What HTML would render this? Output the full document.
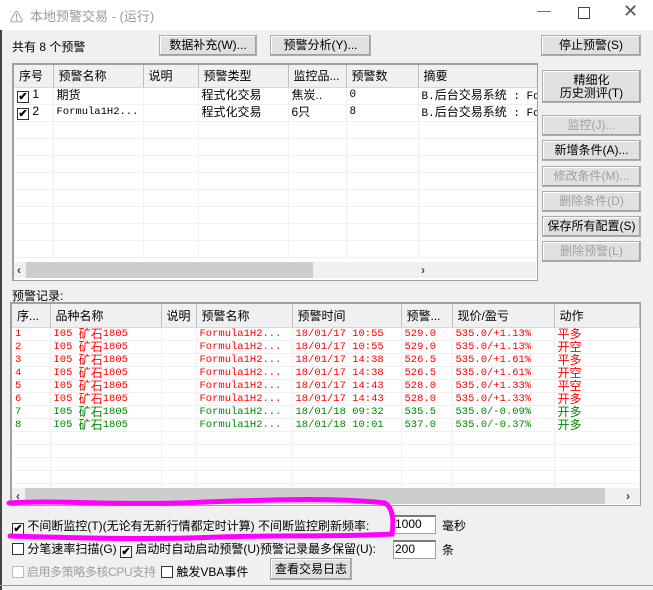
<!DOCTYPE html>
<html><head><meta charset="utf-8"><style>
*{box-sizing:border-box;margin:0;padding:0}
body{width:653px;height:590px;background:#f0f0f0;position:relative;overflow:hidden;font-family:"Liberation Sans","Noto Sans CJK SC",sans-serif;font-size:12px;color:#000}
.a{position:absolute;white-space:nowrap}
.title{left:0;top:0;width:653px;height:30px;background:#fff}
.btn{position:absolute;background:#e1e1e1;border:1px solid #adadad;box-shadow:inset -1px -1px #a0a0a0,inset 1px 1px #fff;text-align:center;font-size:12px;line-height:18px}
.dis{color:#a0a0a0}
.tbl{position:absolute;background:#fff;border:1px solid #a0a0a0;border-top:2px solid #a0a0a0;border-left:2px solid #a0a0a0;overflow:hidden}
table{border-collapse:collapse;table-layout:fixed;position:absolute;left:0;top:0}
td{border-right:1px solid #f0f0f0;border-bottom:1px solid #f0f0f0;white-space:nowrap;overflow:hidden;padding:0 0 0 3px;line-height:13px}
.b td{line-height:12px;height:13px;font-size:12px;vertical-align:top}
th{background:#f0f0f0;font-weight:normal;text-align:left;padding-left:5px;border-right:1px solid #c0c0c0;border-bottom:1px solid #d8d8d8;white-space:nowrap;overflow:hidden;font-size:12px}
.m td,td.m{font-family:"Liberation Mono","Noto Sans CJK SC",monospace;font-size:11px}
.b .m td{font-size:10.5px}
.z{font-size:12px;font-family:"Noto Sans CJK SC",sans-serif}
.b .z{display:inline-block;height:12px;line-height:12px;vertical-align:top;overflow:visible}
.r td{color:#f00}.g td{color:#080}
.cb{display:inline-block;width:12px;height:12px;border:1px solid #333;background:#fff;vertical-align:-2px;position:relative;font-size:11px;line-height:10px;text-align:center;font-weight:bold}
.sb{position:absolute;background:#f0f0f0;height:16px}
.th{position:absolute;background:#cdcdcd;top:0;height:16px}
.inp{position:absolute;background:#fff;border:1px solid #a0a0a0;border-top:2px solid #7a7a7a;font-size:12px;line-height:15px;padding-left:1px}
</style></head><body>
<div class="a title"></div>
<div class="a" style="left:10px;top:7px;color:#888;font-size:13px">⚠</div>
<div class="a" style="left:30px;top:6px;color:#999;font-size:13px">本地预警交易 - (运行)</div>
<div class="a" style="left:537px;top:2px;color:#666;font-size:14px">—</div>
<div class="a" style="left:578px;top:7px;width:12px;height:12px;border:1px solid #444"></div>
<div class="a" style="left:623px;top:1px;color:#555;font-size:18px">✕</div>
<div class="a" style="left:0;top:30px;width:2px;height:560px;background:#444"></div>

<div class="a" style="left:12px;top:38px">共有 8 个预警</div>
<div class="btn" style="left:159px;top:35px;width:98px;height:21px">数据补充(W)...</div>
<div class="btn" style="left:270px;top:35px;width:101px;height:21px">预警分析(Y)...</div>
<div class="btn" style="left:541px;top:35px;width:100px;height:21px">停止预警(S)</div>
<div class="btn" style="left:542px;top:70px;width:99px;height:33px;line-height:13px;padding-top:3px">精细化<br>历史测评(T)</div>
<div class="btn dis" style="left:542px;top:115px;width:99px;height:21px">监控(J)...</div>
<div class="btn" style="left:542px;top:140px;width:99px;height:21px">新增条件(A)...</div>
<div class="btn dis" style="left:542px;top:166px;width:99px;height:21px">修改条件(M)...</div>
<div class="btn dis" style="left:542px;top:191px;width:99px;height:21px">删除条件(D)</div>
<div class="btn" style="left:542px;top:216px;width:99px;height:21px">保存所有配置(S)</div>
<div class="btn dis" style="left:542px;top:241px;width:99px;height:21px">删除预警(L)</div>

<div class="tbl" style="left:12px;top:63px;width:526px;height:218px">
<table style="width:600px">
<colgroup><col style="width:39px"><col style="width:90px"><col style="width:55px"><col style="width:90px"><col style="width:58px"><col style="width:72px"><col style="width:196px"></colgroup>
<tr style="height:22px"><th>序号</th><th>预警名称</th><th>说明</th><th>预警类型</th><th>监控品...</th><th>预警数</th><th>摘要</th></tr>
<tr style="height:17px"><td><span class="cb">✔</span> 1</td><td>期货</td><td></td><td>程式化交易</td><td>焦炭..</td><td class="m">0</td><td class="m">B.<span class="z">后台交易系统</span> : Fo</td></tr>
<tr style="height:17px"><td><span class="cb">✔</span> 2</td><td class="m" style="font-size:10.5px">Formula1H2...</td><td></td><td>程式化交易</td><td>6只</td><td class="m">8</td><td class="m">B.<span class="z">后台交易系统</span> : Fo</td></tr>
<tr style="height:17px"><td></td><td></td><td></td><td></td><td></td><td></td><td></td></tr>
<tr style="height:17px"><td></td><td></td><td></td><td></td><td></td><td></td><td></td></tr>
<tr style="height:17px"><td></td><td></td><td></td><td></td><td></td><td></td><td></td></tr>
<tr style="height:17px"><td></td><td></td><td></td><td></td><td></td><td></td><td></td></tr>
<tr style="height:17px"><td></td><td></td><td></td><td></td><td></td><td></td><td></td></tr>
<tr style="height:17px"><td></td><td></td><td></td><td></td><td></td><td></td><td></td></tr>
<tr style="height:17px"><td></td><td></td><td></td><td></td><td></td><td></td><td></td></tr>
<tr style="height:17px"><td></td><td></td><td></td><td></td><td></td><td></td><td></td></tr>
</table>
<div class="sb" style="left:0;top:197px;width:522px"><div class="th" style="left:12px;width:287px"></div><span class="a" style="left:3px;top:1px;font-weight:bold;color:#444">‹</span><span class="a" style="left:407px;top:1px;font-weight:bold;color:#444">›</span></div>
</div>

<div class="a" style="left:12px;top:287px">预警记录:</div>
<div class="tbl" style="left:10px;top:302px;width:631px;height:204px">
<table class="b" style="width:627px">
<colgroup><col style="width:38px"><col style="width:111px"><col style="width:35px"><col style="width:96px"><col style="width:109px"><col style="width:51px"><col style="width:102px"><col style="width:85px"></colgroup>
<tr style="height:23px"><th style="vertical-align:middle">序...</th><th>品种名称</th><th>说明</th><th>预警名称</th><th>预警时间</th><th>预警...</th><th>现价/盈亏</th><th>动作</th></tr>
<tr class="r m"><td>1</td><td>I05 <span class="z">矿石</span>1805</td><td></td><td>Formula1H2...</td><td>18/01/17 10:55</td><td>529.0</td><td>535.0/+1.13%</td><td><span class="z">平多</span></td></tr>
<tr class="r m"><td>2</td><td>I05 <span class="z">矿石</span>1805</td><td></td><td>Formula1H2...</td><td>18/01/17 10:55</td><td>529.0</td><td>535.0/+1.13%</td><td><span class="z">开空</span></td></tr>
<tr class="r m"><td>3</td><td>I05 <span class="z">矿石</span>1805</td><td></td><td>Formula1H2...</td><td>18/01/17 14:38</td><td>526.5</td><td>535.0/+1.61%</td><td><span class="z">平多</span></td></tr>
<tr class="r m"><td>4</td><td>I05 <span class="z">矿石</span>1805</td><td></td><td>Formula1H2...</td><td>18/01/17 14:38</td><td>526.5</td><td>535.0/+1.61%</td><td><span class="z">开空</span></td></tr>
<tr class="r m"><td>5</td><td>I05 <span class="z">矿石</span>1805</td><td></td><td>Formula1H2...</td><td>18/01/17 14:43</td><td>528.0</td><td>535.0/+1.33%</td><td><span class="z">平空</span></td></tr>
<tr class="r m"><td>6</td><td>I05 <span class="z">矿石</span>1805</td><td></td><td>Formula1H2...</td><td>18/01/17 14:43</td><td>528.0</td><td>535.0/+1.33%</td><td><span class="z">开多</span></td></tr>
<tr class="g m"><td>7</td><td>I05 <span class="z">矿石</span>1805</td><td></td><td>Formula1H2...</td><td>18/01/18 09:32</td><td>535.5</td><td>535.0/-0.09%</td><td><span class="z">开多</span></td></tr>
<tr class="g m"><td>8</td><td>I05 <span class="z">矿石</span>1805</td><td></td><td>Formula1H2...</td><td>18/01/18 10:01</td><td>537.0</td><td>535.0/-0.37%</td><td><span class="z">开多</span></td></tr>
<tr><td></td><td></td><td></td><td></td><td></td><td></td><td></td><td></td></tr>
<tr><td></td><td></td><td></td><td></td><td></td><td></td><td></td><td></td></tr>
<tr><td></td><td></td><td></td><td></td><td></td><td></td><td></td><td></td></tr>
<tr><td></td><td></td><td></td><td></td><td></td><td></td><td></td><td></td></tr>
<tr><td></td><td></td><td></td><td></td><td></td><td></td><td></td><td></td></tr>
<tr><td></td><td></td><td></td><td></td><td></td><td></td><td></td><td></td></tr>
</table>
<div class="sb" style="left:0;top:184px;width:627px"><div class="th" style="left:13px;width:580px"></div><span class="a" style="left:4px;top:1px;font-weight:bold;color:#444">‹</span><span class="a" style="left:614px;top:1px;font-weight:bold;color:#444">›</span></div>
</div>

<div class="a" style="left:12px;top:517px"><span class="cb" style="border-color:#333">✔</span> 不间断监控(T)(无论有无新行情都定时计算) 不间断监控刷新频率:</div>
<div class="inp" style="left:393px;top:515px;width:43px;height:19px">1000</div>
<div class="a" style="left:442px;top:517px">毫秒</div>
<div class="a" style="left:12px;top:540px"><span class="cb"></span> 分笔速率扫描(G) <span class="cb">✔</span> 启动时自动启动预警(U)预警记录最多保留(U):</div>
<div class="inp" style="left:393px;top:540px;width:43px;height:19px">200</div>
<div class="a" style="left:442px;top:541px">条</div>
<div class="a dis" style="left:12px;top:563px;letter-spacing:-0.4px"><span class="cb" style="border-color:#bbb"></span> 启用多策略多核CPU支持</div>
<div class="a" style="left:161px;top:563px"><span class="cb"></span> 触发VBA事件</div>
<div class="btn" style="left:270px;top:558px;width:82px;height:22px;line-height:20px">查看交易日志</div>
<div class="a" style="left:0;top:585px;width:653px;height:1px;background:#999"></div>

<svg class="a" style="left:0;top:0" width="653" height="590"><path d="M9 503 C60 500,100 505,180 503 C260 500,330 497,385 503 C393 508,394 520,392 534 C340 537,280 535,220 537 C150 540,80 538,10 536" fill="none" stroke="#f0f" stroke-width="5" stroke-linecap="round"/></svg>
</body></html>
